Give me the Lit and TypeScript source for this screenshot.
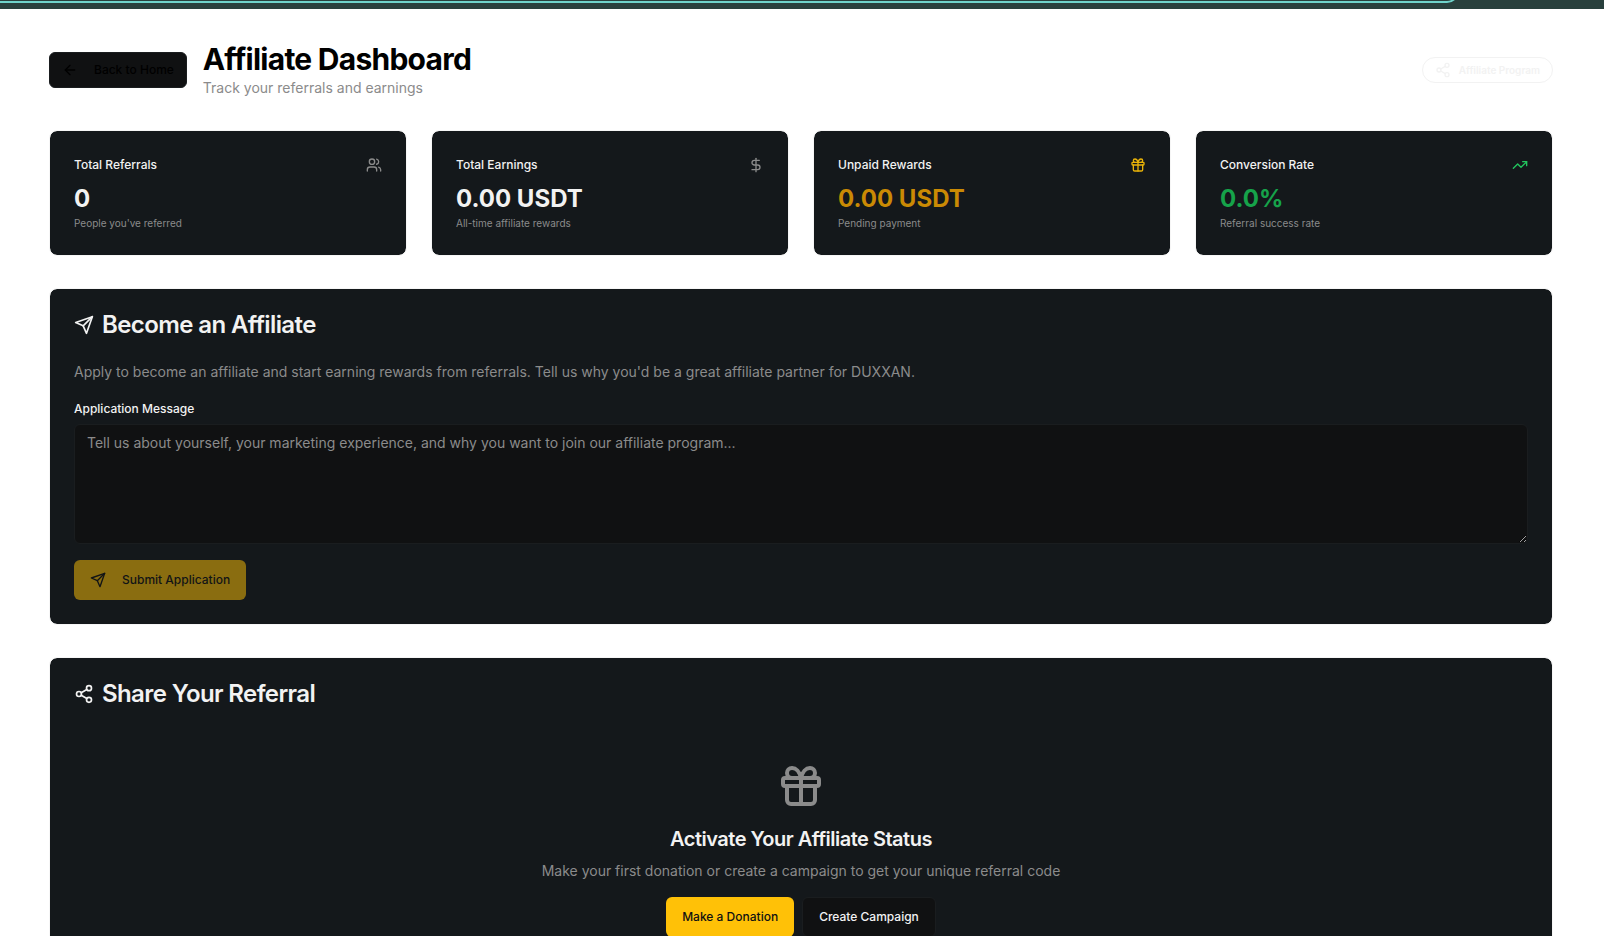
import { LitElement, html, css, svg } from "lit";
import { customElement, property } from "lit/decorators.js";

const glyphs: Record<string, unknown> = {
  arrow: svg`<path d="m12 19-7-7 7-7"/><path d="M19 12H5"/>`,
  share: svg`<circle cx="18" cy="5" r="3"/><circle cx="6" cy="12" r="3"/><circle cx="18" cy="19" r="3"/><path d="m8.59 13.51 6.83 3.98"/><path d="m15.41 6.51-6.82 3.98"/>`,
  users: svg`<path d="M16 21v-2a4 4 0 0 0-4-4H6a4 4 0 0 0-4 4v2"/><circle cx="9" cy="7" r="4"/><path d="M22 21v-2a4 4 0 0 0-3-3.87"/><path d="M16 3.13a4 4 0 0 1 0 7.75"/>`,
  dollar: svg`<path d="M12 2v20"/><path d="M17 5H9.5a3.5 3.5 0 0 0 0 7h5a3.5 3.5 0 0 1 0 7H6"/>`,
  gift: svg`<rect x="3" y="8" width="18" height="4" rx="1"/><path d="M12 8v13"/><path d="M19 12v7a2 2 0 0 1-2 2H7a2 2 0 0 1-2-2v-7"/><path d="M7.5 8a2.5 2.5 0 0 1 0-5A4.8 8 0 0 1 12 8a4.8 8 0 0 1 4.5-5 2.5 2.5 0 0 1 0 5"/>`,
  trend: svg`<path d="m22 7-8.5 8.5-5-5L2 17"/><path d="M16 7h6v6"/>`,
  send: svg`<path d="m22 2-7 20-4-9-9-4Z"/><path d="M22 2 11 13"/>`,
};

@customElement("line-icon")
export class LineIcon extends LitElement {
  @property() name = "";
  static styles = css`
    :host { display: block; flex: none; width: 16px; height: 16px; }
    svg { display: block; width: 100%; height: 100%; }
  `;
  render() {
    return html`<svg viewBox="0 0 24 24" fill="none" stroke="currentColor" stroke-width="2" stroke-linecap="round" stroke-linejoin="round" aria-hidden="true">${glyphs[this.name]}</svg>`;
  }
}

const stats = [
  { title: "Total Referrals", value: "0", note: "People you've referred", icon: "users", tone: "plain" },
  { title: "Total Earnings", value: "0.00 USDT", note: "All-time affiliate rewards", icon: "dollar", tone: "plain" },
  { title: "Unpaid Rewards", value: "0.00 USDT", note: "Pending payment", icon: "gift", tone: "amber" },
  { title: "Conversion Rate", value: "0.0%", note: "Referral success rate", icon: "trend", tone: "green" },
];

@customElement("app-root")
export class AppRoot extends LitElement {
  static styles = css`
    :host {
      display: block;
      height: 100vh;
      overflow: hidden;
      background: #fff;
      color: #f2f2f2;
      font-family: Inter, "Liberation Sans", sans-serif;
      font-size: 14px;
      line-height: 21px;
    }
    * { box-sizing: border-box; }
    h1, h2, h3, p { margin: 0; }
    .strip { display: flex; align-items: flex-end; height: 9px; padding-bottom: 6px; background: #29403d; overflow: hidden; }
    .strip-line { flex: 1; height: 24px; margin-right: 145px; border: solid #6fd3cb; border-width: 0 2px 2px 0; border-bottom-right-radius: 12px; }
    main { display: flex; flex-direction: column; gap: 32px; padding: 33px 51px 33px 49px; }
    header { display: flex; align-items: center; justify-content: space-between; }
    .lead { display: flex; align-items: center; gap: 16px; }
    h1 { margin-bottom: 2px; color: #000; font-size: 30px; line-height: 34px; font-weight: 700; letter-spacing: -0.025em; }
    .muted { color: #8b8b8b; }
    .tagline { line-height: 20px; }
    .btn {
      display: flex; align-items: center; gap: 16px; height: 40px; padding: 0 16px;
      border: 0; border-radius: 6px; font: 500 12px/16px Inter, sans-serif; text-decoration: none; white-space: nowrap;
    }
    .outline { background: #101112; border: 1px solid #1a1d1f; color: #f2f2f2; }
    .back { height: 36px; padding: 0 12px; color: #000; }
    .gold { background: #ffc107; color: #101112; }
    .gold:disabled { opacity: 0.5; }
    .badge {
      display: flex; align-items: center; gap: 8px; height: 26px; padding: 0 12px; border: 1px solid #f2f2f2;
      border-radius: 13px; color: #f2f2f2; font-size: 10px; line-height: 16px; font-weight: 600;
    }
    .stats { display: grid; grid-template-columns: repeat(4, 1fr); gap: 24px; }
    .card {
      padding: 24px; background: #14181b; background-clip: padding-box;
      border: 1px solid #f6f6f6; border-radius: 8px;
    }
    .stat-top { display: flex; align-items: center; justify-content: space-between; margin-bottom: 8px; }
    .stat-title { font-size: 12px; line-height: 20px; font-weight: 500; }
    .value { font-size: 24px; line-height: 32px; font-weight: 700; }
    .note { font-size: 10px; line-height: 16px; }
    .icon-plain { color: #8b8b8b; }
    .icon-amber { color: #eab308; }
    .icon-green { color: #22c55e; }
    .value-amber { color: #ca8a04; }
    .value-green { color: #16a34a; }
    .card-title { display: flex; align-items: center; gap: 8px; margin-bottom: 24px; font-size: 24px; line-height: 24px; font-weight: 600; letter-spacing: -0.025em; }
    .title-icon { width: 20px; height: 20px; }
    form { display: flex; flex-direction: column; align-items: flex-start; gap: 16px; }
    .field { display: flex; flex-direction: column; gap: 4px; width: 100%; }
    label { font-size: 12px; line-height: 22px; font-weight: 500; }
    textarea {
      width: 100%; height: 120px; padding: 8px 12px; resize: vertical; background: #101112;
      border: 1px solid #1a1d1f; border-radius: 6px; color: #f2f2f2; font: 14px/20px Inter, sans-serif;
    }
    textarea::placeholder { color: #8b8b8b; opacity: 1; }
    .activate { display: flex; flex-direction: column; align-items: center; padding: 32px 0; text-align: center; }
    .big-icon { width: 48px; height: 48px; margin-bottom: 16px; }
    h3 { margin-bottom: 8px; font-size: 20px; line-height: 26px; font-weight: 600; letter-spacing: -0.025em; }
    .actions { display: flex; gap: 8px; margin-top: 16px; }
  `;

  render() {
    return html`
      <div class="strip"><div class="strip-line"></div></div>
      <main>
        <header>
          <div class="lead">
            <a class="btn outline back" href="#home"><line-icon name="arrow"></line-icon>Back to Home</a>
            <div>
              <h1>Affiliate Dashboard</h1>
              <p class="muted tagline">Track your referrals and earnings</p>
            </div>
          </div>
          <div class="badge"><line-icon name="share"></line-icon>Affiliate Program</div>
        </header>
        <section class="stats">
          ${stats.map((s) => html`
            <article class="card">
              <div class="stat-top">
                <div class="stat-title">${s.title}</div>
                <line-icon class="icon-${s.tone}" name=${s.icon}></line-icon>
              </div>
              <div class="value value-${s.tone}">${s.value}</div>
              <p class="muted note">${s.note}</p>
            </article>`)}
        </section>
        <section class="card">
          <h2 class="card-title"><line-icon class="title-icon" name="send"></line-icon>Become an Affiliate</h2>
          <form>
            <p class="muted">Apply to become an affiliate and start earning rewards from referrals. Tell us why you'd be a great affiliate partner for DUXXAN.</p>
            <div class="field">
              <label for="message">Application Message</label>
              <textarea id="message" placeholder="Tell us about yourself, your marketing experience, and why you want to join our affiliate program..."></textarea>
            </div>
            <button class="btn gold" type="submit" disabled><line-icon name="send"></line-icon>Submit Application</button>
          </form>
        </section>
        <section class="card">
          <h2 class="card-title"><line-icon class="title-icon" name="share"></line-icon>Share Your Referral</h2>
          <div class="activate">
            <line-icon class="big-icon muted" name="gift"></line-icon>
            <h3>Activate Your Affiliate Status</h3>
            <p class="muted">Make your first donation or create a campaign to get your unique referral code</p>
            <div class="actions">
              <a class="btn gold" href="#donate">Make a Donation</a>
              <a class="btn outline" href="#create">Create Campaign</a>
            </div>
          </div>
        </section>
      </main>`;
  }
}
